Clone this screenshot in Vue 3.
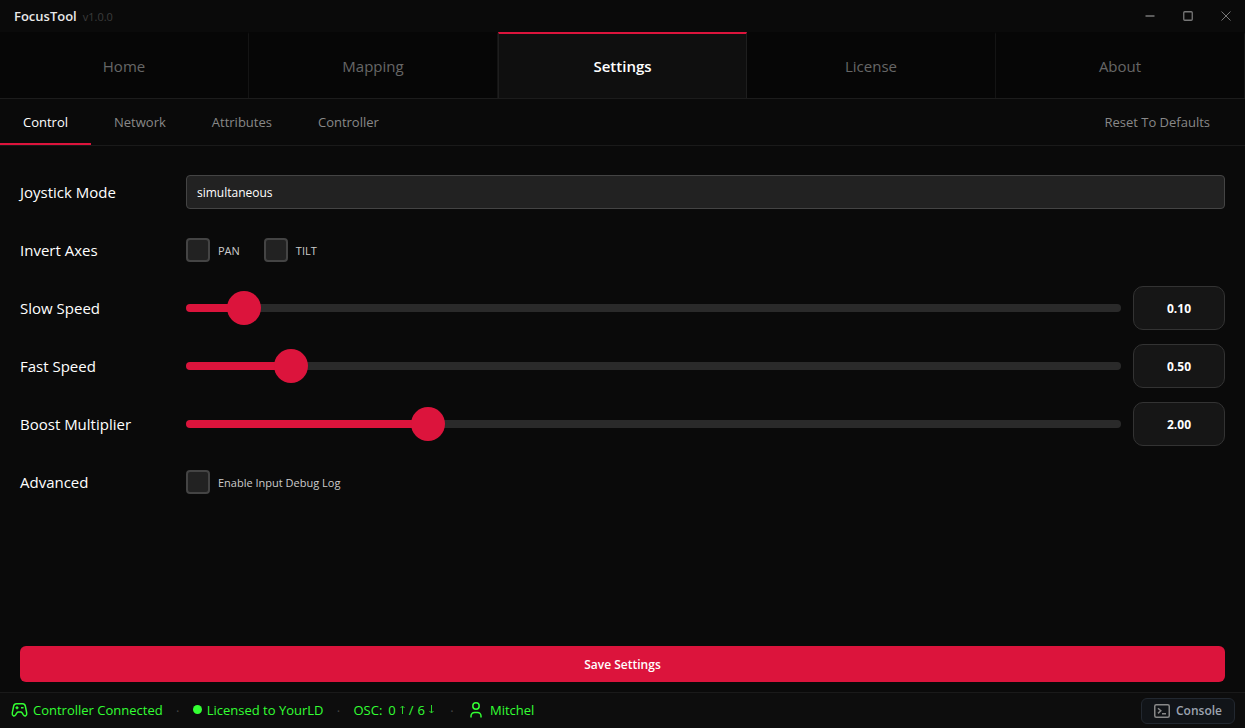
<script setup>
import { ref, reactive } from 'vue'

const mainTabs = ['Home', 'Mapping', 'Settings', 'License', 'About']
const activeMain = ref('Settings')

const subTabs = ['Control', 'Network', 'Attributes', 'Controller']
const activeSub = ref('Control')

const mode = ref('simultaneous')
const invertPan = ref(false)
const invertTilt = ref(false)
const debugLog = ref(false)

const sliders = reactive([
  { id: 'slow', label: 'Slow Speed', min: 0.01, max: 2, value: 0.1 },
  { id: 'fast', label: 'Fast Speed', min: 0.01, max: 5, value: 0.5 },
  { id: 'boost', label: 'Boost Multiplier', min: 1, max: 5, value: 2 },
])

const ratio = (s) => (s.value - s.min) / (s.max - s.min)

function setValue(s, text) {
  const n = Number(text)
  if (!Number.isNaN(n)) s.value = Math.min(s.max, Math.max(s.min, n))
}
</script>

<template>
  <div class="app">
    <header class="titlebar">
      <h1 class="name">FocusTool</h1>
      <span class="version">v1.0.0</span>
      <div class="window-buttons">
        <button type="button" aria-label="Minimize">
          <svg width="10" height="10" viewBox="0 0 10 10"><path d="M.5 5h9" stroke-width="1.5" /></svg>
        </button>
        <button type="button" aria-label="Maximize">
          <svg width="10" height="10" viewBox="0 0 10 10"><rect x=".75" y=".75" width="8.5" height="8.5" rx="1" stroke-width="1.3" /></svg>
        </button>
        <button type="button" aria-label="Close">
          <svg width="10" height="10" viewBox="0 0 10 10"><path d="M.5 .5l9 9M9.5 .5l-9 9" /></svg>
        </button>
      </div>
    </header>

    <nav class="main-tabs">
      <button
        v-for="tab in mainTabs"
        :key="tab"
        type="button"
        :class="{ active: tab === activeMain }"
        @click="activeMain = tab"
      >{{ tab }}</button>
    </nav>

    <nav class="sub-tabs">
      <button
        v-for="tab in subTabs"
        :key="tab"
        type="button"
        class="sub-tab"
        :class="{ active: tab === activeSub }"
        @click="activeSub = tab"
      >{{ tab }}</button>
      <button type="button" class="reset">Reset To Defaults</button>
    </nav>

    <main class="content">
      <div class="row">
        <label class="label" for="mode">Joystick Mode</label>
        <select id="mode" v-model="mode" class="select">
          <option value="simultaneous">simultaneous</option>
          <option value="exclusive">exclusive</option>
        </select>
      </div>

      <div class="row" role="group" aria-labelledby="invert-label">
        <span id="invert-label" class="label">Invert Axes</span>
        <div class="checks">
          <label class="check"><input v-model="invertPan" type="checkbox" />PAN</label>
          <label class="check"><input v-model="invertTilt" type="checkbox" />TILT</label>
        </div>
      </div>

      <div v-for="s in sliders" :key="s.id" class="row">
        <label class="label" :for="s.id">{{ s.label }}</label>
        <div class="slider">
          <input
            :id="s.id"
            v-model.number="s.value"
            class="range"
            type="range"
            :min="s.min"
            :max="s.max"
            step="0.01"
            :style="{ '--ratio': ratio(s) }"
          />
          <input
            class="value"
            type="text"
            inputmode="decimal"
            :aria-label="s.label + ' value'"
            :value="s.value.toFixed(2)"
            @change="setValue(s, $event.target.value)"
          />
        </div>
      </div>

      <div class="row" role="group" aria-labelledby="advanced-label">
        <span id="advanced-label" class="label">Advanced</span>
        <div class="checks">
          <label class="check"><input v-model="debugLog" type="checkbox" />Enable Input Debug Log</label>
        </div>
      </div>

      <button type="button" class="save">Save Settings</button>
    </main>

    <footer class="status">
      <span class="item controller">
        <svg width="17" height="16" viewBox="0 0 17 16">
          <path d="M5.4 1.8h6.2c1.6 0 2.500 1 2.800 2.600l1.300 6.400c.5 3.400-2.100 4-3.500 1.900l-1.200-2c-.3-.6-.7-.8-1.300-.8H7.300c-.6 0-1 .2-1.300.8l-1.200 2c-1.400 2.100-4 1.500-3.500-1.900l1.300-6.400c.3-1.600 1.200-2.600 2.800-2.600z" />
          <path d="M4.500 5.800h3M6 4.300v3M10 5.800h2.500" />
        </svg>
        Controller Connected
      </span>
      <span class="sep">·</span>
      <span class="item license"><i class="dot"></i>Licensed to YourLD</span>
      <span class="sep">·</span>
      <span class="item osc">
        <span>OSC:</span>
        <span class="counts">
          <span>0</span>
          <svg width="5" height="9" viewBox="0 0 5 9" role="img" aria-label="sent"><path d="M2.5 9V1M.5 3l2-2 2 2" /></svg>
          <span>/</span>
          <span>6</span>
          <svg width="5" height="9" viewBox="0 0 5 9" role="img" aria-label="received"><path d="M2.5 0v8M.5 6l2 2 2-2" /></svg>
        </span>
      </span>
      <span class="sep">·</span>
      <span class="item user">
        <svg width="12" height="16" viewBox="0 0 12 16">
          <circle cx="6" cy="4" r="3.2" />
          <path d="M1 15.500v-1.500a3.500 3.500 0 0 1 3.500-3.500h3a3.500 3.500 0 0 1 3.500 3.500v1.500" />
        </svg>
        Mitchel
      </span>
      <button type="button" class="console">
        <svg width="16" height="14" viewBox="0 0 16 14">
          <rect x=".75" y=".75" width="14.5" height="12.5" rx="1.5" />
          <path d="M4 4.200l2.800 2.600L4 9.400M8 9.700h4" />
        </svg>
        Console
      </button>
    </footer>
  </div>
</template>

<style>
body {
  background: #0a0a0a;
}
</style>

<style scoped>
.app {
  display: flex;
  flex-direction: column;
  min-height: 100vh;
  background: #0a0a0a;
  color: #fff;
  font-family: "Segoe UI", "Open Sans", "Noto Sans", sans-serif;
  font-size: 13px;
}

.app *,
.app {
  box-sizing: border-box;
}

button,
input,
select {
  margin: 0;
  font-family: inherit;
}

button {
  padding: 0;
  border: 0;
  background: none;
  cursor: pointer;
}

svg {
  flex: none;
  fill: none;
  stroke: currentColor;
}

.titlebar {
  display: flex;
  align-items: center;
  height: 32px;
  padding-left: 14px;
}

.name {
  margin: 0;
  font-size: 13px;
  font-weight: 600;
  color: #e8e8e8;
}

.version {
  margin-left: 6px;
  font-size: 11px;
  color: #3c3c3c;
}

.window-buttons {
  display: flex;
  align-self: stretch;
  margin-left: auto;
}

.window-buttons button {
  display: grid;
  place-items: center;
  width: 38px;
  color: #777;
}

.main-tabs {
  display: grid;
  grid-template-columns: repeat(5, 1fr);
  height: 67px;
  border-bottom: 1px solid #1c1c1c;
  background: #060606;
}

.main-tabs button {
  border-top: 2px solid transparent;
  border-right: 1px solid #141414;
  font-size: 15px;
  font-weight: 500;
  color: #666;
}

.main-tabs .active {
  border-top-color: #dc143c;
  border-right-color: #1e1e1e;
  border-left: 1px solid #1e1e1e;
  background: #0f0f0f;
  font-weight: 600;
  color: #fff;
}

.sub-tabs {
  display: flex;
  height: 47px;
  border-bottom: 1px solid #1a1a1a;
}

.sub-tab {
  padding: 2px 23px 0;
  border-bottom: 2px solid transparent;
  font-size: 13px;
  color: #888;
}

.sub-tab.active {
  border-bottom-color: #dc143c;
  color: #fff;
}

.reset {
  margin-left: auto;
  padding: 0 35px;
  font-size: 13px;
  color: #888;
}

.content {
  display: flex;
  flex: 1;
  flex-direction: column;
  gap: 14px;
  padding: 24px 20px 10px;
}

.row {
  display: grid;
  grid-template-columns: 150px 1fr;
  align-items: center;
  gap: 16px;
  min-height: 44px;
}

.label {
  font-size: 15px;
  color: #fff;
}

.select {
  appearance: none;
  width: 100%;
  height: 34px;
  padding: 0 10px;
  border: 1px solid #444;
  border-radius: 4px;
  background: #222;
  font-size: 12px;
  color: #fff;
}

.checks {
  display: flex;
  gap: 24px;
}

.check {
  display: flex;
  align-items: center;
  gap: 8px;
  font-size: 11px;
  color: #ccc;
}

.check input {
  appearance: none;
  width: 24px;
  height: 24px;
  border: 2px solid #444;
  border-radius: 4px;
  background: #222;
}

.check input:checked {
  border-color: #dc143c;
  background: #dc143c;
}

.slider {
  display: flex;
  align-items: center;
  gap: 12px;
}

.range {
  --fill: calc(17px + (100% - 34px) * var(--ratio));
  flex: 1;
  min-width: 0;
  height: 8px;
  appearance: none;
  border-radius: 4px;
  background: linear-gradient(to right, #dc143c var(--fill), #2a2a2a var(--fill));
}

.range::-webkit-slider-thumb {
  appearance: none;
  width: 34px;
  height: 34px;
  border: 0;
  border-radius: 50%;
  background: #dc143c;
}

.value {
  width: 92px;
  height: 44px;
  padding: 0;
  border: 1px solid #333;
  border-radius: 10px;
  background: #161616;
  font-size: 12px;
  font-weight: 700;
  text-align: center;
  color: #fff;
}

.save {
  height: 36px;
  margin-top: auto;
  border-radius: 6px;
  background: #dc143c;
  font-size: 12px;
  font-weight: 600;
  color: #fff;
}

.status {
  display: flex;
  align-items: center;
  height: 36px;
  padding: 0 10px;
  border-top: 1px solid #1a1a1a;
  background: #0d0d0d;
  color: #33ff33;
}

.item {
  display: flex;
  align-items: center;
  gap: 5px;
  padding-bottom: 2px;
}

.controller {
  padding-left: 1px;
}

.item svg {
  stroke-width: 1.5;
}

.dot {
  width: 9px;
  height: 9px;
  border-radius: 50%;
  background: #33ff33;
}

.sep {
  width: 30px;
  text-align: center;
  color: #444;
}

.osc {
  gap: 6px;
  padding-right: 3px;
}

.counts {
  display: flex;
  align-items: center;
  gap: 4px;
}

.counts svg {
  color: #2bd42b;
  stroke-width: 1;
}

.user {
  gap: 8px;
  padding-left: 3px;
}

.console {
  display: flex;
  align-items: center;
  justify-content: center;
  gap: 6px;
  width: 94px;
  height: 26px;
  margin-left: auto;
  border: 1px solid #222830;
  border-radius: 6px;
  background: #111418;
  font-size: 12px;
  font-weight: 600;
  color: #9ca3af;
}

.console svg {
  color: #888;
  stroke-width: 1.5;
}
</style>
